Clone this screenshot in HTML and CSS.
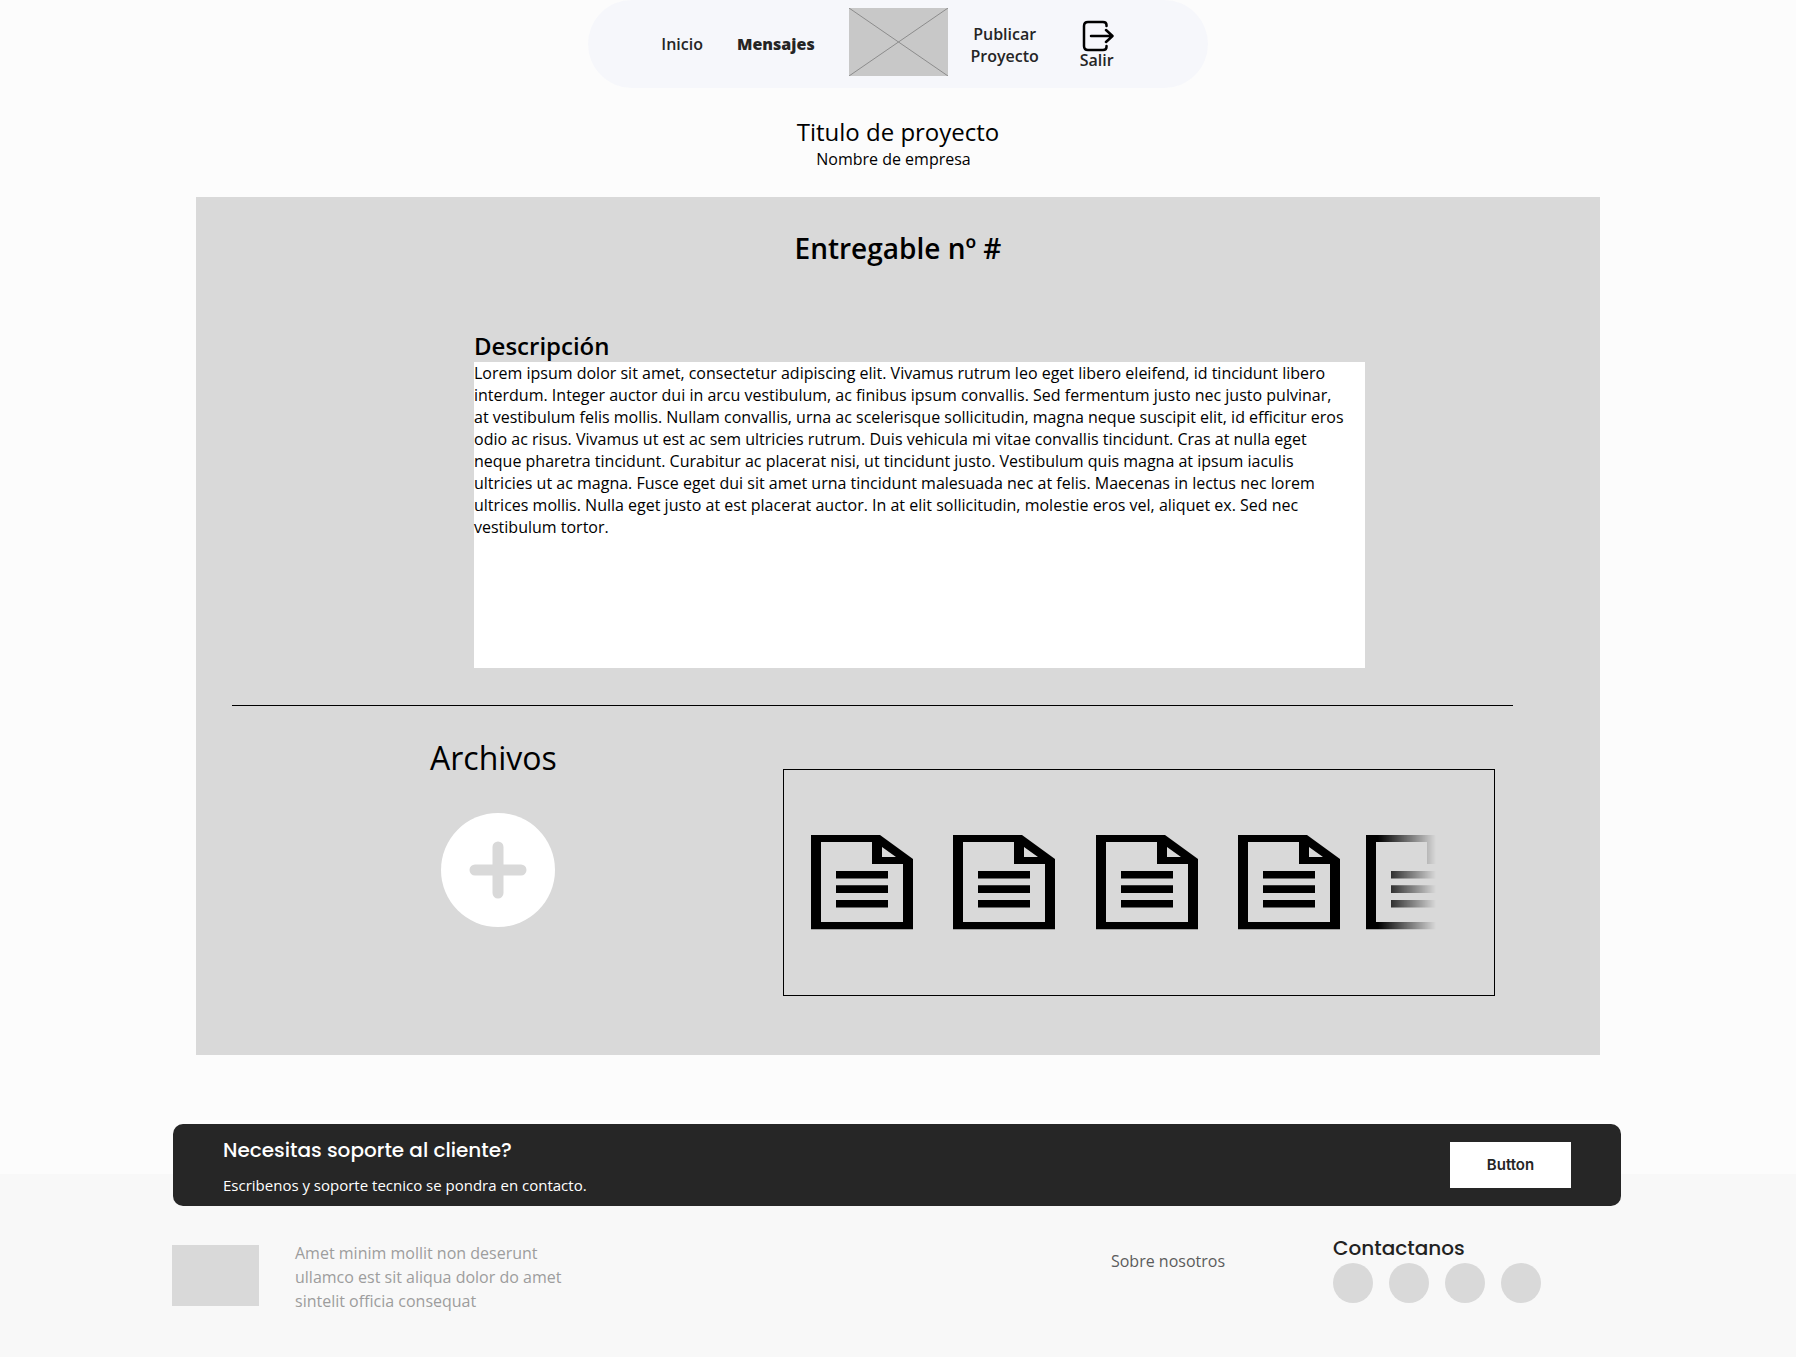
FILE: index.html
```html
<!DOCTYPE html>
<html lang="es">
<head>
<meta charset="utf-8">
<title>Entregable</title>
<meta name="viewport" content="width=device-width, initial-scale=1">
<link rel="stylesheet" href="styles.css">
</head>
<body>
<svg class="sprite" aria-hidden="true">
  <symbol id="file" viewBox="0 0 102 95">
    <path fill-rule="evenodd" d="M0 0H69L102 24V94.300H0ZM10 7V87H92V29H61V7ZM71 12V22H85Z"/>
    <path d="M25 36H77V43.500H25ZM25 50.300H77V58H25ZM25 65H77V72.500H25Z"/>
  </symbol>
</svg>

<header class="topbar">
  <nav class="nav" aria-label="Principal">
    <a class="nav-link" href="#">Inicio</a>
    <a class="nav-link nav-link-current" href="#" aria-current="page">Mensajes</a>
    <svg class="nav-logo" viewBox="0 0 99 68" role="img" aria-label="Logo">
      <rect width="99" height="68" fill="#c8c8c8"/>
      <path d="M0 0L99 68M99 0L0 68" stroke="#8c8c8c"/>
    </svg>
    <a class="nav-link nav-publish" href="#">Publicar Proyecto</a>
    <a class="nav-link nav-exit" href="#">
      <svg class="exit-icon" viewBox="0 0 34 32" aria-hidden="true">
        <path d="M26.500 6V5Q26.500 2 23 2H8Q4 2 4 6V26Q4 30 8 30H23Q26.500 30 26.500 27V26M11 16H32M26 10L32.500 16L26 22"/>
      </svg>
      Salir
    </a>
  </nav>
</header>

<main class="page">
  <div class="project">
    <h1 class="project-title">Titulo de proyecto</h1>
    <p class="project-company">Nombre de empresa</p>
  </div>

  <section class="panel">
    <h2 class="panel-title">Entregable nº #</h2>
    <div class="description">
      <h3 class="description-title">Descripción</h3>
      <p class="description-text">Lorem ipsum dolor sit amet, consectetur adipiscing elit. Vivamus rutrum leo eget libero eleifend, id tincidunt libero interdum. Integer auctor dui in arcu vestibulum, ac finibus ipsum convallis. Sed fermentum justo nec justo pulvinar, at vestibulum felis mollis. Nullam convallis, urna ac scelerisque sollicitudin, magna neque suscipit elit, id efficitur eros odio ac risus. Vivamus ut est ac sem ultricies rutrum. Duis vehicula mi vitae convallis tincidunt. Cras at nulla eget neque pharetra tincidunt. Curabitur ac placerat nisi, ut tincidunt justo. Vestibulum quis magna at ipsum iaculis ultricies ut ac magna. Fusce eget dui sit amet urna tincidunt malesuada nec at felis. Maecenas in lectus nec lorem ultrices mollis. Nulla eget justo at est placerat auctor. In at elit sollicitudin, molestie eros vel, aliquet ex. Sed nec vestibulum tortor.</p>
    </div>
    <hr class="divider">
    <div class="files">
      <div class="files-add">
        <h3 class="files-title">Archivos</h3>
        <button class="add-button" type="button" aria-label="Agregar archivo">
          <svg viewBox="0 0 114 114" aria-hidden="true">
            <circle cx="57" cy="57" r="57" fill="#fff"/>
            <path d="M57 34V80M34 57H80" stroke="#d9d9d9" stroke-width="11" stroke-linecap="round"/>
          </svg>
        </button>
      </div>
      <ul class="file-list">
        <li><a href="#" aria-label="Archivo 1"><svg class="file-icon"><use href="#file"/></svg></a></li>
        <li><a href="#" aria-label="Archivo 2"><svg class="file-icon"><use href="#file"/></svg></a></li>
        <li><a href="#" aria-label="Archivo 3"><svg class="file-icon"><use href="#file"/></svg></a></li>
        <li><a href="#" aria-label="Archivo 4"><svg class="file-icon"><use href="#file"/></svg></a></li>
        <li class="file-faded"><a href="#" aria-label="Archivo 5"><svg class="file-icon"><use href="#file"/></svg></a></li>
      </ul>
    </div>
  </section>
</main>

<footer class="footer">
  <div class="support">
    <div>
      <h2 class="support-title">Necesitas soporte al cliente?</h2>
      <p class="support-text">Escribenos y soporte tecnico se pondra en contacto.</p>
    </div>
    <button class="support-button" type="button">Button</button>
  </div>
  <div class="footer-row">
    <div class="footer-logo"></div>
    <p class="footer-about">Amet minim mollit non deserunt ullamco est sit aliqua dolor do amet sintelit officia consequat</p>
    <a class="footer-link" href="#">Sobre nosotros</a>
    <div class="contact">
      <h2 class="contact-title">Contactanos</h2>
      <div class="contact-links">
        <a href="#" aria-label="Red social 1"></a>
        <a href="#" aria-label="Red social 2"></a>
        <a href="#" aria-label="Red social 3"></a>
        <a href="#" aria-label="Red social 4"></a>
      </div>
    </div>
  </div>
</footer>
</body>
</html>
```
FILE: styles.css
```css
* {
  box-sizing: border-box;
}

body {
  margin: 0;
  min-height: 100vh;
  display: flex;
  flex-direction: column;
  background: #fcfcfc;
  color: #000;
  font: 16px/22px "Open Sans", "Noto Sans", sans-serif;
}

h1, h2, h3, p, ul {
  margin: 0;
  padding: 0;
  font-weight: 400;
}

a {
  color: inherit;
  text-decoration: none;
}

button {
  border: 0;
  padding: 0;
  font: inherit;
  cursor: pointer;
}

.sprite {
  display: none;
}

/* Navigation */

.topbar {
  display: flex;
  justify-content: center;
}

.nav {
  display: flex;
  align-items: center;
  height: 88px;
  padding: 0 94px 0 73px;
  border-radius: 44px;
  background: #f6f7fb;
  color: #252525;
  font-weight: 600;
}

.nav-link-current {
  margin-left: 34px;
  font-weight: 800;
}

.nav-logo {
  width: 99px;
  height: 68px;
  margin: 0 18px 4px 34px;
}

.nav-publish {
  width: 78px;
  padding-top: 2px;
  text-align: center;
}

.nav-exit {
  display: flex;
  flex-direction: column;
  align-items: center;
  line-height: 16px;
  margin-left: 36px;
}

.exit-icon {
  width: 34px;
  height: 32px;
  fill: none;
  stroke: #000;
  stroke-width: 2.500;
  stroke-linecap: round;
  stroke-linejoin: round;
}

/* Project heading */

.page {
  padding: 28px 196px 69px;
}

.project {
  padding-bottom: 27px;
  text-align: center;
}

.project-title {
  font-size: 24px;
  line-height: 32px;
}

.project-company {
  padding-right: 9px;
}

/* Deliverable */

.panel {
  padding: 31px 87px 59px 36px;
  background: #d9d9d9;
}

.panel-title {
  padding-left: 51px;
  font-size: 28px;
  font-weight: 600;
  line-height: 40px;
  text-align: center;
}

.description {
  margin: 62px 148px 37px 242px;
}

.description-title {
  font-size: 24px;
  font-weight: 600;
  line-height: 32px;
}

.description-text {
  min-height: 306px;
  padding-right: 16px;
  background: #fff;
}

.divider {
  height: 1px;
  margin: 0;
  border: 0;
  background: #000;
}

.files {
  display: flex;
  justify-content: space-between;
  padding: 30px 18px 0 198px;
}

.files-title {
  font-size: 32px;
  line-height: 44px;
}

.add-button {
  display: block;
  width: 114px;
  height: 114px;
  margin: 33px 0 0 11px;
  border-radius: 50%;
  background: none;
}

.file-list {
  display: flex;
  align-items: center;
  justify-content: space-between;
  width: 712px;
  height: 227px;
  margin-top: 33px;
  padding: 0 58px 0 27px;
  border: 1px solid #000;
  list-style: none;
}

.file-icon {
  display: block;
  width: 102px;
  height: 95px;
}

.file-faded {
  width: 70px;
  margin-left: -14px;
  overflow: hidden;
  -webkit-mask-image: linear-gradient(to right, #000 12px, transparent 70px);
  mask-image: linear-gradient(to right, #000 12px, transparent 70px);
}

/* Footer */

.footer {
  flex: 1;
  padding: 0 175px 40px 172px;
  background: linear-gradient(#fcfcfc 50px, #f8f8f8 50px);
}

.support {
  display: flex;
  align-items: center;
  justify-content: space-between;
  height: 82px;
  margin-left: 1px;
  padding: 0 50px;
  border-radius: 10px;
  background: #262626;
  color: #fff;
}

.support-title,
.contact-title {
  font: 500 20px/30px Poppins, Inter, sans-serif;
}

.support-text {
  padding-top: 9px;
  font-size: 15px;
}

.support-button {
  width: 121px;
  height: 46px;
  background: #fff;
  color: #252525;
  font: 600 15px/24px Inter, sans-serif;
}

.footer-row {
  display: flex;
  align-items: flex-start;
  padding-top: 27px;
}

.footer-logo {
  width: 87px;
  height: 61px;
  margin-top: 12px;
  background: #d9d9d9;
}

.footer-about {
  width: 290px;
  margin: 8px auto 0 36px;
  color: #9d9d9d;
  line-height: 24px;
}

.footer-link {
  margin: 17px 108px 0 0;
  color: #5c5c5c;
}

.contact {
  width: 288px;
}

.contact-title {
  color: #222;
}

.contact-links {
  display: flex;
  gap: 16px;
}

.contact-links a {
  width: 40px;
  height: 40px;
  border-radius: 50%;
  background: #d9d9d9;
}
```
